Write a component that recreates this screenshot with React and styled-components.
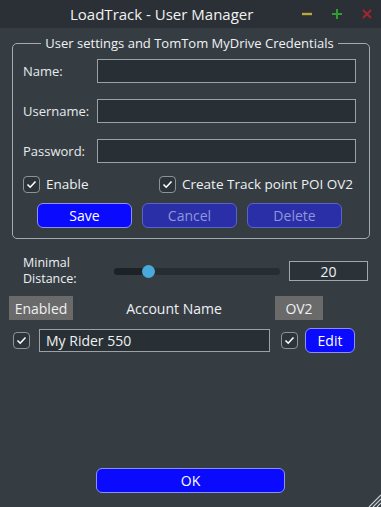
import React from 'react';
import styled, { createGlobalStyle } from 'styled-components';

const Global = createGlobalStyle`
  html, body { margin: 0; padding: 0; background: #353d43; }
  * { box-sizing: border-box; }
`;

const Window = styled.div`
  position: relative;
  width: 381px;
  height: 507px;
  display: flex;
  flex-direction: column;
  background: #353d43;
  color: #eef0f2;
  font-family: 'Open Sans', 'Noto Sans', sans-serif;
  font-size: 13px;
`;

const TitleBar = styled.div`
  height: 28px;
  display: flex;
  align-items: center;
  background: #2a3035;
  padding: 0 8px 0 70px;
  font-size: 15px;
  color: #f2f2f2;
`;

const Title = styled.div`
  flex: 1;
`;

const TitleButtons = styled.div`
  display: flex;
  gap: 18px;
  align-items: center;
`;

const Body = styled.div`
  flex: 1;
  display: flex;
  flex-direction: column;
  padding: 0 11px 0 12px;
`;

const Group = styled.fieldset`
  margin: 6px 0 0 0;
  padding: 7px 13px 10px 10px;
  border: 1.5px solid #a3abb0;
  border-radius: 5px;
  min-width: 0;
`;

const Legend = styled.legend`
  margin: 0 auto;
  padding: 0 4px;
  line-height: 18px;
  color: #f0f2f4;
`;

const Form = styled.div`
  display: grid;
  grid-template-columns: 74px 1fr;
  row-gap: 16px;
  align-items: center;
`;

const Label = styled.label`
  color: #e8eaec;
`;

const Field = styled.div`
  height: 24px;
  background: #283035;
  border: 1px solid #9aa2a6;
  display: flex;
  align-items: center;
  padding: 0 6px;
  color: #eef0f2;
  font-size: 14px;
`;

const CheckRow = styled.div`
  display: grid;
  grid-template-columns: 136px 1fr;
  margin-top: 12px;
`;

const CheckItem = styled.div`
  display: flex;
  align-items: center;
  gap: 6px;
  font-size: 13.5px;
  white-space: nowrap;
  color: #eef0f2;
`;

const Box = styled.span`
  width: 17px;
  height: 17px;
  border: 1px solid #8c9499;
  border-radius: 4px;
  background: #2d353a;
  display: inline-flex;
  align-items: center;
  justify-content: center;
  flex: none;
  margin-left: ${p => p.$ml || 0}px;
`;

const ButtonRow = styled.div`
  display: flex;
  justify-content: center;
  gap: 10px;
  margin-top: 10px;
`;

const Button = styled.button`
  width: ${p => p.$w || 95}px;
  height: 25px;
  border-radius: 6px;
  border: 1px solid ${p => (p.$dim ? '#5a64c8' : '#8d92f0')};
  background: ${p => (p.$dim ? '#2a2fa8' : '#0a0aff')};
  color: ${p => (p.$dim ? '#8f96d8' : '#ffffff')};
  font-family: inherit;
  font-size: 14px;
  padding: 0;
  margin-left: ${p => p.$ml || 0}px;
`;

const DistanceRow = styled.div`
  display: flex;
  align-items: center;
  padding: 0 0 0 11px;
  margin-top: 16px;
`;

const DistanceLabel = styled.div`
  width: 91px;
  line-height: 16px;
  font-size: 12.5px;
`;

const Slider = styled.div`
  position: relative;
  width: 166px;
  height: 7px;
  border-radius: 4px;
  background: #272e33;
`;

const SliderFill = styled.div`
  height: 100%;
  border-radius: 4px;
  background: #1c2226;
`;

const Thumb = styled.div`
  position: absolute;
  top: 50%;
  width: 13px;
  height: 13px;
  margin: -6.5px 0 0 -6.5px;
  border-radius: 50%;
  background: #48a9da;
`;

const SpinBox = styled.div`
  width: 79px;
  height: 20px;
  margin-left: 9px;
  border: 1px solid #a0a8ac;
  background: #2c3338;
  display: flex;
  align-items: center;
  justify-content: center;
  font-size: 14px;
`;

const HeaderRow = styled.div`
  display: grid;
  grid-template-columns: 64px 1fr 48px;
  align-items: center;
  margin: 9px 47px 0 -3px;
  height: 24px;
`;

const HeaderCell = styled.div`
  height: 24px;
  display: flex;
  align-items: center;
  justify-content: center;
  background: ${p => (p.$shaded ? '#6a6a6a' : 'transparent')};
  font-size: 14px;
`;

const DataRow = styled.div`
  display: flex;
  align-items: center;
  margin: 8px 0 0 1px;
`;

const NameField = styled(Field)`
  width: 231px;
  height: 23px;
  margin-left: 9px;
`;

const Spacer = styled.div`
  flex: 1;
`;

const Footer = styled.div`
  display: flex;
  justify-content: center;
  padding: 0 1px 14px 0;
`;

const Grip = styled.svg`
  position: absolute;
  right: 0;
  bottom: 0;
`;

const Check = ({ ml }) => (
  <Box $ml={ml}>
    <svg width="11" height="9" viewBox="0 0 11 9">
      <path d="M1.5 4.5 L4.2 7.2 L9.5 1.5" fill="none" stroke="#ffffff" strokeWidth="1.6" />
    </svg>
  </Box>
);

export default function App() {
  return (
    <Window>
      <Global />
      <TitleBar>
        <Title>LoadTrack - User Manager</Title>
        <TitleButtons>
          <svg width="12" height="12" viewBox="0 0 12 12">
            <path d="M1 6 H11" stroke="#b9a936" strokeWidth="2.4" />
          </svg>
          <svg width="12" height="12" viewBox="0 0 12 12">
            <path d="M1 6 H11 M6 1 V11" stroke="#2f9e2f" strokeWidth="2" />
          </svg>
          <svg width="12" height="12" viewBox="0 0 12 12">
            <path d="M2 2 L10 10 M10 2 L2 10" stroke="#a3262f" strokeWidth="2" />
          </svg>
        </TitleButtons>
      </TitleBar>
      <Body>
        <Group>
          <Legend>User settings and TomTom MyDrive Credentials</Legend>
          <Form>
            <Label>Name:</Label>
            <Field />
            <Label>Username:</Label>
            <Field />
            <Label>Password:</Label>
            <Field />
          </Form>
          <CheckRow>
            <CheckItem><Check />Enable</CheckItem>
            <CheckItem><Check />Create Track point POI OV2</CheckItem>
          </CheckRow>
          <ButtonRow>
            <Button>Save</Button>
            <Button $dim>Cancel</Button>
            <Button $dim>Delete</Button>
          </ButtonRow>
        </Group>
        <DistanceRow>
          <DistanceLabel>Minimal<br />Distance:</DistanceLabel>
          <Slider>
            <SliderFill style={{ width: '21%' }} />
            <Thumb style={{ left: '21%' }} />
          </Slider>
          <SpinBox>20</SpinBox>
        </DistanceRow>
        <HeaderRow>
          <HeaderCell $shaded>Enabled</HeaderCell>
          <HeaderCell>Account Name</HeaderCell>
          <HeaderCell $shaded>OV2</HeaderCell>
        </HeaderRow>
        <DataRow>
          <Check />
          <NameField>My Rider 550</NameField>
          <Check ml={11} />
          <Button $w={50} $ml={7}>Edit</Button>
        </DataRow>
        <Spacer />
        <Footer>
          <Button $w={189}>OK</Button>
        </Footer>
      </Body>
      <Grip width="16" height="16" viewBox="0 0 16 16">
        <path d="M4 16 L16 4 M8 16 L16 8 M12 16 L16 12" stroke="#c8cdd0" strokeWidth="1.2" />
      </Grip>
    </Window>
  );
}
